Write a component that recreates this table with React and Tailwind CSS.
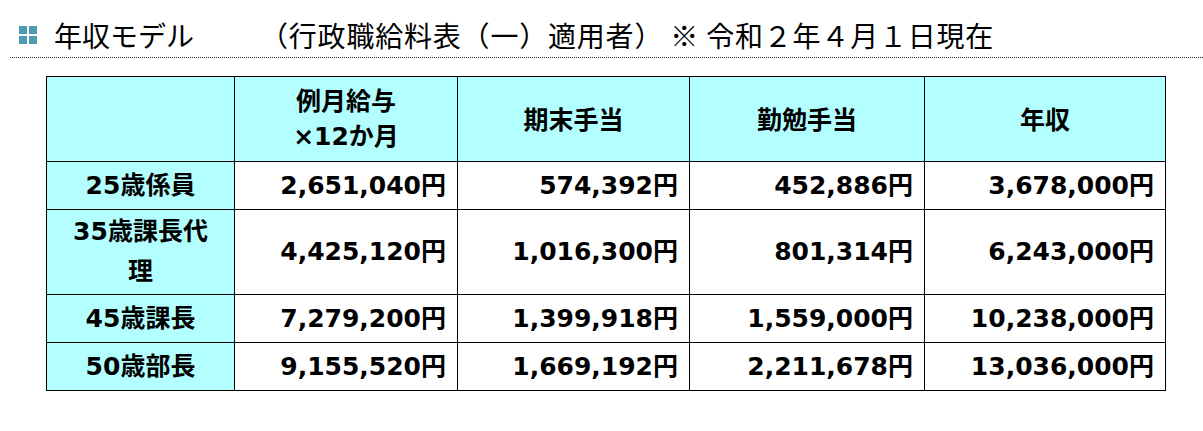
import React from 'react';

const rows = [
  { label: ['25歳係員'], values: ['2,651,040円', '574,392円', '452,886円', '3,678,000円'], h: 'h-[48px]' },
  { label: ['35歳課長代', '理'], values: ['4,425,120円', '1,016,300円', '801,314円', '6,243,000円'], h: 'h-[85px]' },
  { label: ['45歳課長'], values: ['7,279,200円', '1,399,918円', '1,559,000円', '10,238,000円'], h: 'h-[48px]' },
  { label: ['50歳部長'], values: ['9,155,520円', '1,669,192円', '2,211,678円', '13,036,000円'], h: 'h-[48px]' },
];

const cjk = "font-['Noto_Sans_CJK_JP',sans-serif]";
const num = "font-['DejaVu_Sans','Noto_Sans_CJK_JP',sans-serif]";

const App = () => {
  return (
    <div className="w-[1203px] h-[431px] bg-white text-black">
      {/* heading */}
      <div className="ml-[10px] h-[58px] flex items-center pl-[9px] pt-[12px] border-b border-dotted border-[#333]">
        <div className="grid grid-cols-2 gap-[2px] w-[18px] h-[18px] shrink-0">
          <span className="bg-[#4e9bb1]" />
          <span className="bg-[#4e9bb1]" />
          <span className="bg-[#4e9bb1]" />
          <span className="bg-[#4e9bb1]" />
        </div>
        <h2 className={`${cjk} ml-[17px] text-[28px] leading-none font-normal text-black`}>年収モデル</h2>
        <p className={`${cjk} ml-[66px] text-[28px] leading-none text-black tracking-[0.8px]`}>
          （行政職給料表（一）適用者）&nbsp;※ 令和２年４月１日現在
        </p>
      </div>

      {/* table */}
      <table className="ml-[46px] mt-[18px] border-collapse table-fixed w-[1119px] font-bold">
        <colgroup>
          <col className="w-[188px]" />
          <col className="w-[223px]" />
          <col className="w-[232px]" />
          <col className="w-[235px]" />
          <col className="w-[241px]" />
        </colgroup>
        <thead>
          <tr className="h-[85px] bg-[#b3ffff]">
            <th className="border border-black" />
            <th className={`border border-black ${num} text-[25px] leading-[35px] text-center font-bold`}>
              例月給与<br />×12か月
            </th>
            <th className={`border border-black ${cjk} text-[25px] text-center font-bold`}>期末手当</th>
            <th className={`border border-black ${cjk} text-[25px] text-center font-bold`}>勤勉手当</th>
            <th className={`border border-black ${cjk} text-[25px] text-center font-bold`}>年収</th>
          </tr>
        </thead>
        <tbody>
          {rows.map((r) => (
            <tr key={r.label.join('')} className={r.h}>
              <td className={`border border-black bg-[#b3ffff] ${num} text-[25px] leading-[40px] text-center font-bold`}>
                {r.label[0]}
                {r.label[1] && (<><br />{r.label[1]}</>)}
              </td>
              {r.values.map((v, i) => (
                <td key={i} className={`border border-black ${num} text-[25px] text-right pr-[11px] font-bold`}>
                  {v}
                </td>
              ))}
            </tr>
          ))}
        </tbody>
      </table>
    </div>
  );
};

export default App;
